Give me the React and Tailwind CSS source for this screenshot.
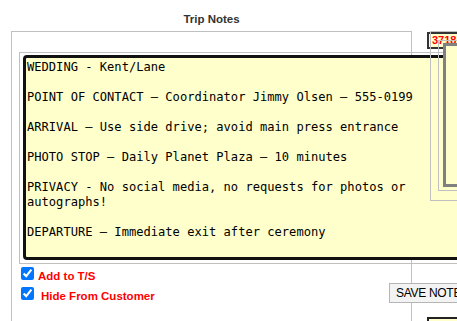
import React from 'react';

const NOTES = `WEDDING - Kent/Lane

POINT OF CONTACT – Coordinator Jimmy Olsen – 555-0199

ARRIVAL – Use side drive; avoid main press entrance

PHOTO STOP – Daily Planet Plaza – 10 minutes

PRIVACY - No social media, no requests for photos or
autographs!

DEPARTURE – Immediate exit after ceremony`;

const sans = { fontFamily: '"Liberation Sans", Arial, sans-serif' };

const CheckRow = ({ label, gap }) => (
  <label className="flex items-start h-[20px]">
    <input type="checkbox" defaultChecked className="m-0 w-[13px] h-[13px] accent-[#0075ff] shrink-0" />
    <span className={`${gap} mt-[2px] text-[11.5px] leading-[14px] font-bold text-[#ff0000]`}>{label}</span>
  </label>
);

export default function App() {
  return (
    <div className="relative w-[457px] h-[321px] overflow-hidden bg-white" style={sans}>
      <div className="ml-[11px] w-[401px]">
        <div className="pt-[12px] pb-[5px] text-center text-[11.5px] leading-[14px] font-bold text-[#333]">
          Trip Notes
        </div>

        <div className="h-[290px] border-l border-t border-r border-[#c0c0c0] pt-[20px] pl-[7px]">
          <div className="w-[470px] border border-[#c0c0c0] pt-[2px] px-[3px] pb-[3px]">
            <div
              className="h-[205px] border-[3px] border-[#111] rounded-[4px] bg-[#ffffcc] pt-[2px] pl-[1px] text-[12.1px] leading-[15px] text-black whitespace-pre overflow-hidden"
              style={{ fontFamily: '"DejaVu Sans Mono", "Liberation Mono", monospace' }}
            >
              {NOTES}
            </div>
          </div>

          <div className="flex">
            <div className="w-[370px] pl-[2px] pt-[3px] shrink-0">
              <CheckRow label="Add to T/S" gap="ml-[4px]" />
              <CheckRow label="Hide From Customer" gap="ml-[7px]" />
            </div>
            <button className="mt-[19px] h-[20px] w-[90px] shrink-0 border border-[#b5b5b5] bg-[#f3f3f3] pl-[6px] text-left text-[12px] tracking-[-0.3px] leading-[18px] text-black whitespace-nowrap">
              SAVE NOTE
            </button>
          </div>
        </div>
      </div>

      {/* neighbouring panels that overlap from the right */}
      <div className="absolute left-[427px] top-[32px] w-[40px] h-[17px] border-2 border-[#333] bg-[#ffffcc] pl-[3px] text-[11px] leading-[13px] font-bold text-[#ff0000]">
        3718
      </div>
      <div className="absolute left-[430px] top-[31px] w-[40px] h-[170px] border border-[#c0c0c0]" />
      <div className="absolute left-[438px] top-[40px] w-[30px] h-[151px] border border-[#c0c0c0]" />
      <div className="absolute left-[443px] top-[43px] w-[30px] h-[144px] border-[3px] border-[#808080] bg-[#ffffcc]" />
      <div className="absolute left-[427px] top-[317px] w-[40px] h-[10px] border-t-2 border-l-2 border-[#222] bg-[#ffffcc]" />
    </div>
  );
}
